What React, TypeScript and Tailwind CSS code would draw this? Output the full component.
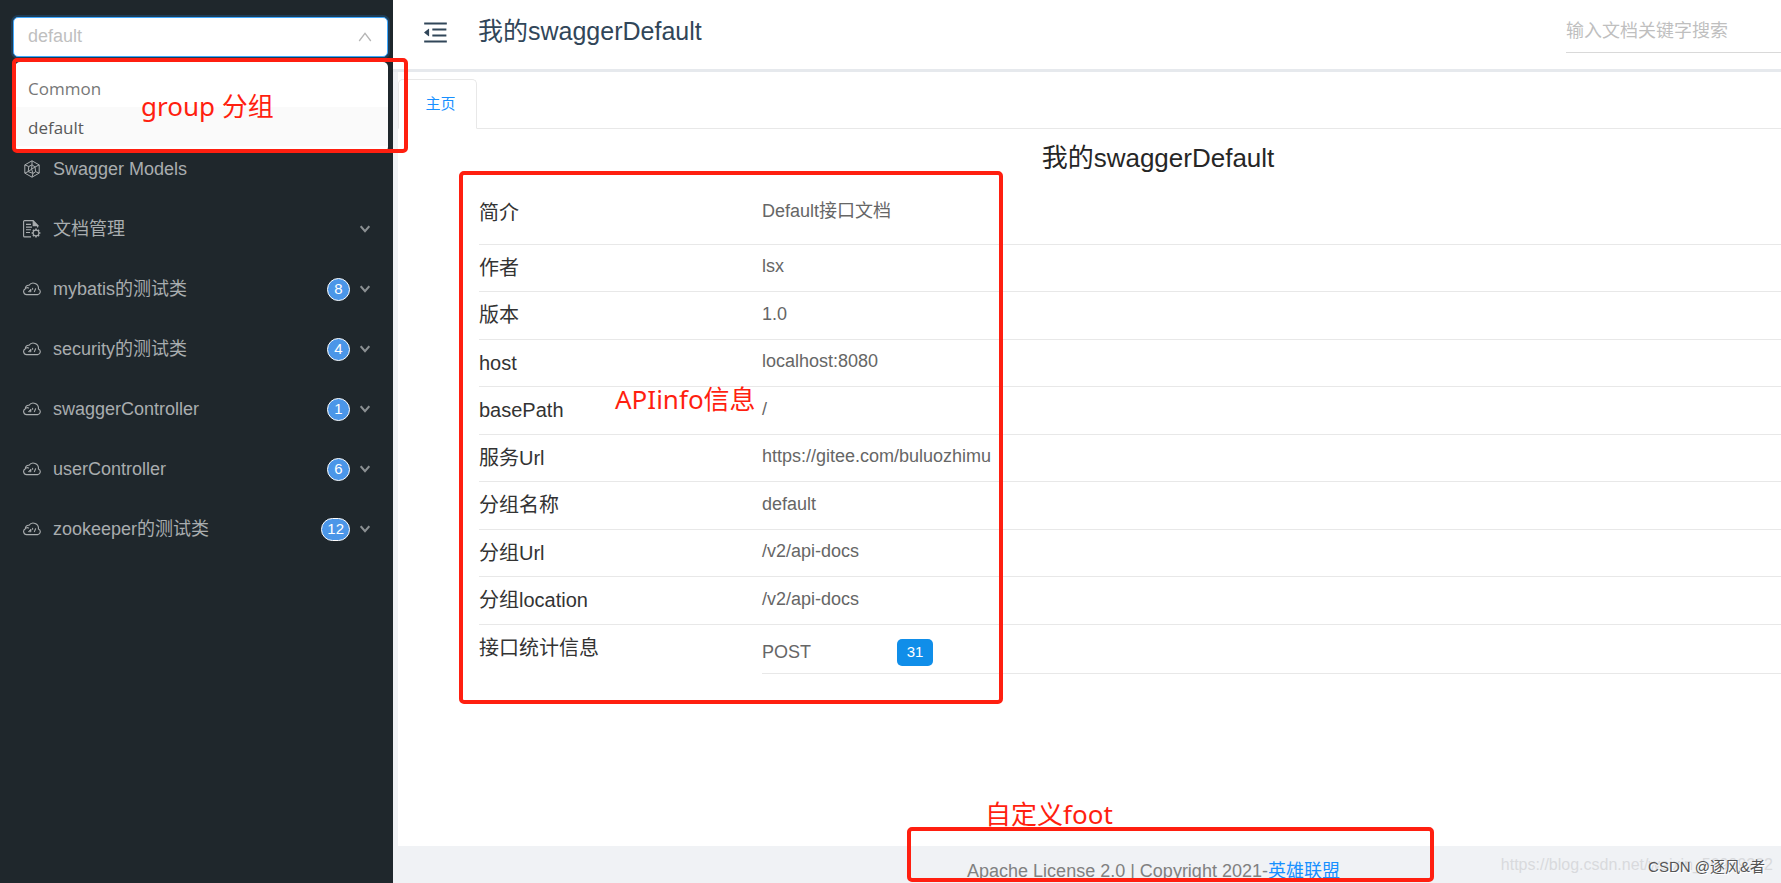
import React, { useState } from "react";
import { AiOutlineMenuFold } from "react-icons/ai";

type IconKind = "models" | "doc" | "cloud";

interface MenuEntry {
  label: string;
  icon: IconKind;
  count?: number;
  expandable?: boolean;
}

const menu: MenuEntry[] = [
  { label: "Swagger Models", icon: "models" },
  { label: "文档管理", icon: "doc", expandable: true },
  { label: "mybatis的测试类", icon: "cloud", count: 8, expandable: true },
  { label: "security的测试类", icon: "cloud", count: 4, expandable: true },
  { label: "swaggerController", icon: "cloud", count: 1, expandable: true },
  { label: "userController", icon: "cloud", count: 6, expandable: true },
  { label: "zookeeper的测试类", icon: "cloud", count: 12, expandable: true },
];

const info: [string, string][] = [
  ["作者", "lsx"],
  ["版本", "1.0"],
  ["host", "localhost:8080"],
  ["basePath", "/"],
  ["服务Url", "https://gitee.com/buluozhimu"],
  ["分组名称", "default"],
  ["分组Url", "/v2/api-docs"],
  ["分组location", "/v2/api-docs"],
];

function ModelsIcon() {
  return (
    <svg viewBox="0 0 18 18" className="size-[18px]" fill="none" stroke="currentColor" strokeWidth="1" strokeLinejoin="round">
      <path d="M9 .8 16.2 4.9v8.2L9 17.2 1.8 13.1V4.9Z" />
      <path d="M9 .8v4M1.8 4.9l4 1.6M16.2 4.9 12 7M1.8 13.1l3.4-1.5M16.2 13.1l-3.6-1.4M9 17.2l1-3.8" />
      <path d="M9 4.8 5.8 6.5l-.6 5.1L10 13.4l2.6-1.7L12 7Z" />
      <path d="M9 4.8l-.4 4.4 3.4-2.2M8.6 9.2l-3.4 2.4M8.6 9.2 10 13.4" />
    </svg>
  );
}

function DocIcon() {
  return (
    <svg viewBox="0 0 18 18" className="size-[18px]" fill="none" stroke="currentColor" strokeWidth="1.1">
      <path d="M8 16.9H1.6a1 1 0 0 1-1-1V1.6a1 1 0 0 1 1-1H10" />
      <path d="M10.2.6v5H15Z" fill="currentColor" />
      <path d="M14.6 5.6v2M3 4.4h5M3 7.1h6M3 9.8h5M3 12.5h4" />
      <circle cx="13" cy="13" r="2.9" />
      <path d="M13 8.6v1.5M13 15.9v1.5M8.6 13h1.5M15.9 13h1.5M9.9 9.9l1 1M15.1 15.1l1 1M16.1 9.9l-1 1M10.9 15.1l-1 1" strokeWidth="1.5" />
    </svg>
  );
}

function CloudIcon() {
  return (
    <svg viewBox="0 0 18 18" className="size-[18px]" fill="none" stroke="currentColor" strokeWidth="1.1" strokeLinecap="round">
      <path d="M3.6 14.6h11a2.9 2.9 0 0 0 .8-5.6A5.2 5.2 0 0 0 6 5.3a3 3 0 0 0-3.6 3.4A3.1 3.1 0 0 0 3.6 14.6Z" />
      <path d="M3.2 7.9c.9-.4 1.7-.3 2.3.1" />
      <path d="M5.6 11.4 8 9v2.4Z" fill="currentColor" strokeWidth=".7" />
      <path d="M9.6 8.3v1M12.6 8.8l-1.2 2.8" />
    </svg>
  );
}

const icons: Record<IconKind, () => React.JSX.Element> = {
  models: ModelsIcon,
  doc: DocIcon,
  cloud: CloudIcon,
};

function Sidebar() {
  const [group, setGroup] = useState("default");
  return (
    <aside className="flex w-[393px] shrink-0 flex-col bg-[#1f272c]">
      <div className="relative pl-[13px] pr-[5px] pt-[17px]">
        <select
          aria-label="group"
          value={group}
          onChange={(e) => setGroup(e.target.value)}
          className="h-10 w-full appearance-none rounded-[5px] border border-[#40a9ff] bg-white px-[14px] pb-[2px] text-[18px] text-[#bfbfbf] shadow-[0_0_0_2px_rgba(24,144,255,0.2)] outline-none"
        >
          <option>default</option>
          <option>Common</option>
        </select>
        <svg viewBox="0 0 14 10" className="pointer-events-none absolute right-[21px] top-8 h-[10px] w-[14px]" fill="none" stroke="#b5b5b5" strokeWidth="1.3">
          <path d="M1.2 9 7 1.4 12.8 9" />
        </svg>
        <ul className="absolute left-[15px] right-[5px] top-[62px] z-10 rounded-[5px] bg-white py-[6px] font-['Open_Sans','Noto_Sans_CJK_SC',sans-serif] text-[17px]">
          <li>
            <button type="button" onClick={() => setGroup("Common")} className="block h-[39px] w-full px-[13px] pt-[2px] text-left text-[#777]">Common</button>
          </li>
          <li>
            <button type="button" onClick={() => setGroup("default")} className="block h-[39px] w-full bg-[#fafafa] px-[13px] pt-[2px] text-left font-medium text-[#595959]">default</button>
          </li>
        </ul>
      </div>
      <nav className="mt-[82px]">
        <ul>
          {menu.map((m) => {
            const Icon = icons[m.icon];
            return (
              <li key={m.label}>
                <a href="#" className="flex h-[60px] items-center pl-[23px] pr-[23px] text-[18px] text-[#a9adaf]">
                  <Icon />
                  <span className="ml-3 grow">{m.label}</span>
                  {m.count !== undefined && (
                    <span className="flex h-[23px] min-w-[23px] items-center justify-center rounded-full border border-white bg-[#4b96e8] px-[5px] text-[15px] text-white">
                      {m.count}
                    </span>
                  )}
                  {m.expandable && (
                    <svg viewBox="0 0 10 8" className="ml-[10px] h-2 w-[10px]" fill="none" stroke="#8b9093" strokeWidth="2">
                      <path d="M.7 1.2 5 6.2 9.3 1.2" />
                    </svg>
                  )}
                </a>
              </li>
            );
          })}
        </ul>
      </nav>
    </aside>
  );
}

function Header() {
  return (
    <header className="flex h-[72px] shrink-0 items-center border-b-[3px] border-[#e6e9ed] bg-white pb-[5px]">
      <button type="button" aria-label="menu" className="ml-[28px] text-[#314659]">
        <AiOutlineMenuFold className="size-[29px]" />
      </button>
      <h1 className="ml-[28px] grow text-[25px] text-[#314659]">我的swaggerDefault</h1>
      <input
        type="search"
        aria-label="输入文档关键字搜索"
        placeholder="输入文档关键字搜索"
        className="h-[42px] w-[215px] border-b border-[#d9d9d9] bg-transparent text-[18px] outline-none placeholder:text-[#bfbfbf]"
      />
    </header>
  );
}

function Home() {
  return (
    <main className="ml-[5px] grow bg-white pt-[7px]">
      <div className="flex h-[50px] items-end border-b border-[#e8e8e8]">
        <button type="button" className="-mb-px h-[50px] w-[79px] rounded-t-[5px] border border-b-white border-[#e8e8e8] bg-white pl-[6px] text-[15px] text-[#1890ff]">
          主页
        </button>
      </div>
      <h2 className="h-[53px] pl-[137px] pt-[9px] text-center text-[26px] leading-[40px] text-[#262626]">我的swaggerDefault</h2>
      <table className="ml-[81px] w-[calc(100%-81px)] table-fixed border-collapse text-left">
        <colgroup>
          <col className="w-[283px]" />
          <col />
        </colgroup>
        <tbody>
          <tr className="h-[62px] border-b border-[#e8e8e8]">
            <th className="text-[20px] font-normal text-[#333]">简介</th>
            <td className="pb-[2px] text-[18px] text-[#666]">Default接口文档</td>
          </tr>
          {info.map(([k, v]) => (
            <tr key={k} className="h-12 border-b border-[#e8e8e8] even:h-[47px]">
              <th className="text-[20px] font-normal text-[#333]">{k}</th>
              <td className="pb-[2px] text-[18px] text-[#666]">{v}</td>
            </tr>
          ))}
          <tr className="h-[49px]">
            <th className="pb-[2px] text-[20px] font-normal text-[#333]">接口统计信息</th>
            <td className="border-b border-[#e8e8e8] text-[18px] text-[#666]">
              <div className="flex items-center pt-[8px]">
                <span className="w-[135px]">POST</span>
                <span className="flex h-[27px] w-9 items-center justify-center rounded-[5px] bg-[#108ee9] text-[15px] text-white">31</span>
              </div>
            </td>
          </tr>
        </tbody>
      </table>
    </main>
  );
}

function Annotations() {
  return (
    <div className="pointer-events-none absolute inset-0 z-20 font-['Noto_Sans','Noto_Sans_CJK_SC',sans-serif] text-[26px] leading-[30px] text-[#ff1f10]">
      <div className="absolute left-[12px] top-[58px] h-[95px] w-[396px] rounded-[5px] border-4 border-[#ff1f10]" />
      <p className="absolute left-[141px] top-[91px]">group 分组</p>
      <div className="absolute left-[459px] top-[171px] h-[533px] w-[544px] rounded-[5px] border-4 border-[#ff1f10]" />
      <p className="absolute left-[615px] top-[384px]">APIinfo信息</p>
      <div className="absolute left-[907px] top-[827px] h-[55px] w-[527px] rounded-[5px] border-4 border-[#ff1f10]" />
      <p className="absolute left-[985px] top-[799px]">自定义foot</p>
    </div>
  );
}

export default function App() {
  return (
    <div className="relative flex h-screen overflow-hidden bg-[#f0f2f5] font-['Liberation_Sans','Noto_Sans_CJK_SC',sans-serif]">
      <Sidebar />
      <div className="flex min-w-0 grow flex-col">
        <Header />
        <Home />
        <footer className="h-[37px] shrink-0 pl-[133px] pt-[11px] text-center text-[18px] leading-[28px] text-[#808080]">
          Apache License 2.0 | Copyright 2021-<a href="#" className="text-[#1890ff]">英雄联盟</a>
        </footer>
      </div>
      <Annotations />
      <p className="absolute bottom-[6px] right-[8px] text-[16px] leading-6 text-[#d9dadd]">https://blog.csdn.net/weixin_50999222</p>
      <p className="absolute bottom-[4px] right-[16px] text-[15px] leading-6 text-[#555] [text-shadow:1px_1px_0_#fff]">CSDN @逐风&amp;者</p>
    </div>
  );
}
